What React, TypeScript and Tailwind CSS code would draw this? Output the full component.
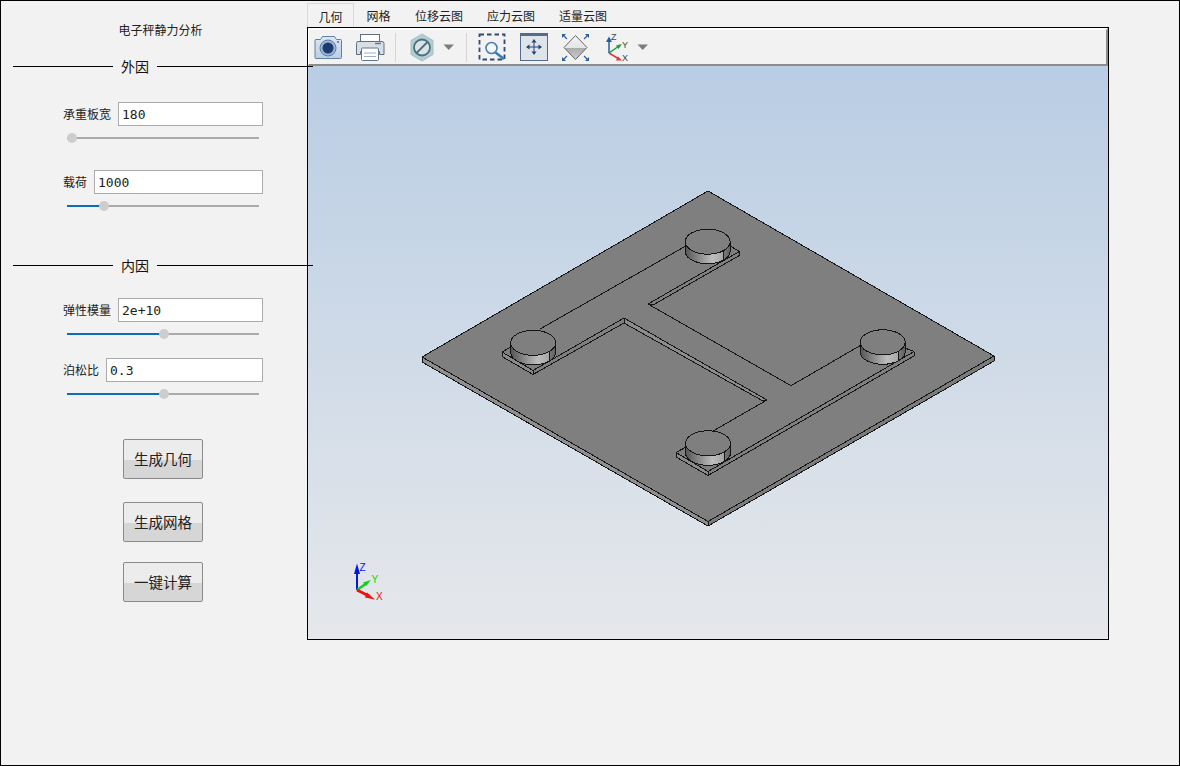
const cjk = "font-['Noto_Sans_CJK_SC','Liberation_Sans',sans-serif]";

function Section({ label }: { label: string }) {
  return (
    <div className="relative z-10 ml-[12px] flex h-[18px] w-[300px] items-center">
      <div className="h-px w-[100px] bg-black" />
      <div className="w-[44px] text-center text-[14px] leading-[18px] text-[#111]">{label}</div>
      <div className="h-px w-[156px] bg-black" />
    </div>
  );
}

function Field({ label, value, offset, labelW, mt }: { label: string; value: string; offset: number; labelW: string; mt: string }) {
  return (
    <div className={`ml-[62px] w-[200px] ${mt}`}>
      <div className="flex h-[24px] items-center">
        <div className={`${labelW} shrink-0 text-[12px] leading-[24px] text-[#222]`}>{label}</div>
        <div className="h-[24px] flex-1 border border-[#ababab] bg-white pl-[3px] font-['DejaVu_Sans_Mono',monospace] text-[13px] leading-[24px] font-light text-[#222]">
          {value}
        </div>
      </div>
      <div className="relative ml-[4px] mt-[11px] h-[2px] w-[192px] bg-[#ababab]">
        <div className="h-full bg-[#0f6cbd]" style={{ width: `${offset + 5}px` }} />
        <div className="absolute top-[-4px] h-[10px] w-[10px] rounded-full bg-[#cdcdcd]" style={{ left: `${offset}px` }} />
      </div>
    </div>
  );
}

function Btn({ label, mt }: { label: string; mt: string }) {
  return (
    <button className={`ml-[122px] block h-[40px] w-[80px] rounded-[2px] border border-[#8a8a8a] bg-[linear-gradient(#ececec_0,#ececec_52%,#d6d6d6_52%,#d6d6d6_100%)] text-[14.5px] text-[#222] ${mt}`}>
      {label}
    </button>
  );
}

function Toolbar() {
  return (
    <div className="flex h-[38px] shrink-0 border-t-2 border-r-2 border-b-2 border-l border-t-white border-r-[#8c8c8c] border-b-[#8c8c8c] border-l-white bg-[#f2f2f2]">
      <svg width="360" height="34" viewBox="309 30 360 34" className="shrink-0">
        <defs>
          <linearGradient id="camG" x1="0" y1="0" x2="0" y2="1"><stop offset="0" stopColor="#dde7f3" /><stop offset="1" stopColor="#bccee3" /></linearGradient>
          <linearGradient id="diaG" x1="0" y1="0" x2="0" y2="1"><stop offset="0" stopColor="#f2f2f2" /><stop offset="0.5" stopColor="#e6e6e6" /><stop offset="0.5" stopColor="#a9a9a9" /><stop offset="1" stopColor="#cfcfcf" /></linearGradient>
        </defs>
        {/* camera */}
        <path d="M316 39.5H320.5L322.5 36.5H334.5L336.5 39.5H340.5Q341.5 39.5 341.5 40.5V57.5Q341.5 58.5 340.5 58.5H316Q315 58.5 315 57.5V40.5Q315 39.5 316 39.5Z" fill="url(#camG)" stroke="#5f7fa8" />
        <circle cx="328" cy="48" r="8" fill="#9db6d3" stroke="#5d7ea6" />
        <circle cx="328" cy="48" r="5.5" fill="#1d3a6e" />
        <circle cx="338" cy="42" r="1" fill="#4a6a94" />
        {/* printer */}
        <rect x="360.5" y="34.5" width="19" height="9" fill="#fff" stroke="#5f6f80" />
        <path d="M358 41.5H382Q384 41.5 384 43.5V54.5H379.5V51.5H360.5V54.5H356.5V43.5Q356.5 41.5 358 41.5Z" fill="#d8dee6" stroke="#5f6f80" />
        <rect x="361.5" y="48" width="17" height="12.5" rx="1" fill="#fff" stroke="#5f7890" />
        <path d="M364 53H376M364 56.5H376" stroke="#9fb2c6" />
        <path d="M375 43.5H381" stroke="#5f7890" strokeWidth="1.5" />
        {/* separator */}
        <path d="M395.5 33V62" stroke="#d4d4d4" />
        {/* hex */}
        <path d="M422 34L433 40.5V54.5L422 61L411 54.5V40.5Z" fill="#b6cbd1" stroke="#a8bec5" />
        <circle cx="422" cy="47.5" r="8" fill="#dbe1e4" stroke="#44727e" strokeWidth="1.8" />
        <path d="M416.5 53L427.5 42" stroke="#44727e" strokeWidth="1.8" />
        <path d="M443.5 44.5H454L448.7 50Z" fill="#7d7d7d" />
        <path d="M466.5 33V62" stroke="#d4d4d4" />
        {/* zoom box */}
        <rect x="479.5" y="34.5" width="25" height="25" fill="none" stroke="#33496f" strokeWidth="1.8" strokeDasharray="4.5 3" />
        <circle cx="491.5" cy="48" r="5.5" fill="#f4f8fc" stroke="#4c7fb0" strokeWidth="1.6" />
        <path d="M495.5 52.5L504 59" stroke="#2f7fc0" strokeWidth="2.6" />
        {/* fit */}
        <rect x="520.5" y="33.5" width="27" height="27" fill="#dfe3ea" stroke="#546a8e" />
        <rect x="520" y="33" width="28" height="3" fill="#546a8e" />
        <path d="M534 41V53M527 47H541" stroke="#27456f" />
        <path d="M534 39L531.5 42.5H536.5ZM534 55L531.5 51.5H536.5ZM526 47L529.5 44.5V49.5ZM542 47L538.5 44.5V49.5Z" fill="#27456f" />
        {/* diamond */}
        <path d="M575.5 35.5L587 47.5L575.5 59.5L564 47.5Z" fill="url(#diaG)" stroke="#666" />
        <path d="M562 34H566L562 38ZM589 34H585L589 38ZM562 61H566L562 57ZM589 61H585L589 57Z" fill="#2f5f95" />
        <path d="M563 35L567 39M588 35L584 39M563 60L567 56M588 60L584 56" stroke="#2f5f95" strokeWidth="1.2" />
        {/* axes */}
        <path d="M609 53V39" stroke="#1f5fa8" strokeWidth="1.5" />
        <path d="M609 36.5L606 42H612Z" fill="#1f5fa8" />
        <path d="M609 53L619 46" stroke="#1c9a3a" strokeWidth="1.5" />
        <path d="M622 44L616 45.5L618.5 49Z" fill="#1c9a3a" />
        <path d="M609 53L619 59" stroke="#e0353a" strokeWidth="1.5" />
        <path d="M622 60.5L616 60.5L618 56.5Z" fill="#e0353a" />
        <text x="611" y="40" fontSize="9" fill="#444" fontFamily="Liberation Sans">Z</text>
        <text x="622" y="48" fontSize="9" fill="#444" fontFamily="Liberation Sans">Y</text>
        <text x="622" y="61" fontSize="9" fill="#444" fontFamily="Liberation Sans">X</text>
        <path d="M637.5 44.5H648L642.7 50Z" fill="#7d7d7d" />
      </svg>
    </div>
  );
}

function Cyl({ cx, cy }: { cx: number; cy: number }) {
  const rx = 22.5, ry = 12.5, h = 9.5;
  return (
    <g>
      <path d={`M${cx - rx} ${cy}V${cy + h}A${rx} ${ry} 0 0 0 ${cx + rx} ${cy + h}V${cy}Z`} fill="url(#cyl)" stroke="#151515" shapeRendering="crispEdges" />
      <path d={`M${cx + 16} ${cy + 9}V${cy + h + 9}`} stroke="#151515" shapeRendering="crispEdges" />
      <ellipse cx={cx} cy={cy} rx={rx} ry={ry} fill="#7f7f7f" stroke="#151515" shapeRendering="crispEdges" />
    </g>
  );
}

function Model() {
  return (
    <svg width="800" height="572" viewBox="308 66 800 572" className="block">
      <defs>
        <linearGradient id="cyl" x1="0" y1="0" x2="1" y2="0">
          <stop offset="0" stopColor="#555555" />
          <stop offset="0.6" stopColor="#bdbdbd" />
          <stop offset="0.85" stopColor="#a5a5a5" />
          <stop offset="0.86" stopColor="#7a7a7a" />
          <stop offset="1" stopColor="#5f5f5f" />
        </linearGradient>
      </defs>
      <g stroke="#151515" strokeWidth="1" strokeLinejoin="round" shapeRendering="crispEdges">
        <path d="M422 357L708 521.5V526L422 362Z" fill="#8f8f8f" />
        <path d="M994 356L708 521.5V526L994 361Z" fill="#7b7b7b" />
        <path d="M708 191L994 356L708 521.5L422 357Z" fill="#7f7f7f" />
        {/* pads, side walls */}
        <path d="M502 352L533 370.5V374.5L502 356.5Z" fill="#8c8c8c" />
        <path d="M533 370.5L624 318V323L533 374.5Z" fill="#7f7f7f" />
        <path d="M624 318L767 400L763 401L624 323Z" fill="#8c8c8c" />
        <path d="M676 452.5L708 471.5V475.5L676 457Z" fill="#8c8c8c" />
        <path d="M708 471.5L914 351.5V356L708 475.5Z" fill="#7f7f7f" />
        <path d="M739.3 251.5V255.5L653 305L648 304Z" fill="#7f7f7f" />
        {/* top edges */}
        <path d="M502 352L515 344.5M540 329L685 246.5M731 246.5L739.3 251.5" fill="none" />
        <path d="M648 304L791 385.7L862 344.5M905 348L914 351.5" fill="none" />
        <path d="M767 400L713 431M676 452.5L687 446.5" fill="none" />
      </g>
      <Cyl cx={707.7} cy={241.7} />
      <Cyl cx={533.2} cy={342.8} />
      <Cyl cx={882.7} cy={342.3} />
      <Cyl cx={708} cy={443.3} />
      {/* triad */}
      <path d="M357 590V570" stroke="#0018e0" strokeWidth="2" />
      <path d="M357 563.5L354 574H360Z" fill="#0018e0" />
      <path d="M357 590L367 583" stroke="#10d020" strokeWidth="2.5" />
      <path d="M371 580L363 582.5L366 586Z" fill="#10d020" />
      <path d="M357 590L369 596" stroke="#f01010" strokeWidth="3" />
      <path d="M375 599.5L367 592.5L365 597.5Z" fill="#f01010" />
      <text x="359.5" y="571" fontSize="10" fill="#0018e0" fontFamily="Liberation Sans">Z</text>
      <text x="371.5" y="583" fontSize="10" fill="#10d020" fontFamily="Liberation Sans">Y</text>
      <text x="376" y="600" fontSize="10" fill="#f01010" fontFamily="Liberation Sans">X</text>
    </svg>
  );
}

export default function App() {
  return (
    <div className={`${cjk} flex h-[766px] w-[1180px] border border-black bg-[#f2f2f2]`}>
      <div className="relative z-10 w-[306px] shrink-0">
        <div className="mt-[21px] h-[16px] text-center text-[12px] leading-[16px] text-[#222]">
          <span className="ml-[13px]">电子秤静力分析</span>
        </div>
        <div className="mt-[19px]"><Section label="外因" /></div>
        <Field label="承重板宽" value="180" offset={0} labelW="w-[55px]" mt="mt-[27px]" />
        <Field label="载荷" value="1000" offset={32} labelW="w-[31px]" mt="mt-[31px]" />
        <div className="mt-[49px]"><Section label="内因" /></div>
        <Field label="弹性模量" value="2e+10" offset={92} labelW="w-[55px]" mt="mt-[24px]" />
        <Field label="泊松比" value="0.3" offset={92} labelW="w-[43px]" mt="mt-[23px]" />
        <Btn label="生成几何" mt="mt-[44px]" />
        <Btn label="生成网格" mt="mt-[23px]" />
        <Btn label="一键计算" mt="mt-[20px]" />
      </div>
      <div className="w-[802px] shrink-0 pt-[2px]">
        <div className="flex h-[24px] text-[12px] leading-[25px] text-[#222]">
          <div className="w-[47px] border border-b-0 border-[#d9d9d9] text-center">几何</div>
          <div className="w-[49px] text-center">网格</div>
          <div className="w-[72px] text-center">位移云图</div>
          <div className="w-[72px] text-center">应力云图</div>
          <div className="w-[72px] text-center">适量云图</div>
        </div>
        <div className="flex h-[613px] flex-col border border-black bg-[#f2f2f2]">
          <Toolbar />
          <div className="flex-1 overflow-hidden bg-[linear-gradient(#b9cde4,#e6e8eb)]">
            <Model />
          </div>
        </div>
      </div>
    </div>
  );
}
